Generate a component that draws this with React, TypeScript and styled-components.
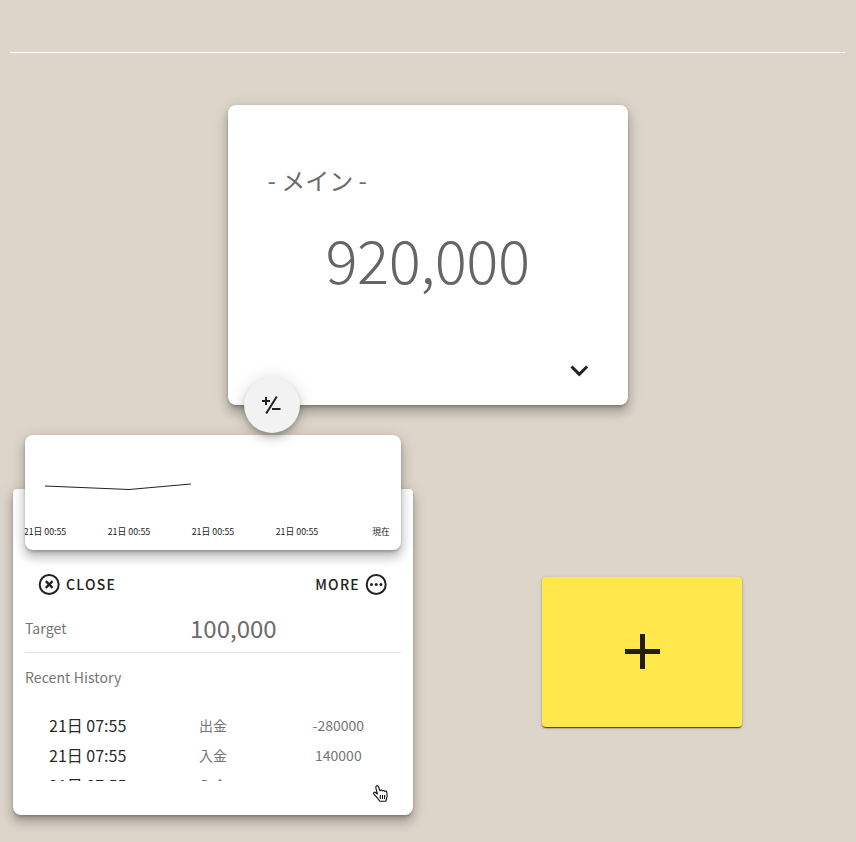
import React from "react";
import styled, { createGlobalStyle } from "styled-components";

const GlobalStyle = createGlobalStyle`
  *, *::before, *::after { box-sizing: border-box; }
  body {
    margin: 0;
    background: #ddd5c9;
    color: rgba(0, 0, 0, 0.87);
    font-family: "Noto Sans CJK JP", "Noto Sans", sans-serif;
    -webkit-font-smoothing: antialiased;
  }
`;

const Page = styled.div`
  position: relative;
  height: 842px;
  overflow: hidden;
  background: #ddd5c9;
`;

const Header = styled.header`
  height: 53px;
  margin: 0 11px 0 10px;
  border-bottom: 1px solid #fff;
`;

const Overview = styled.section`
  display: flex;
  justify-content: center;
  padding-top: 52px;
`;

const Surface = styled.div<{ $radius: string }>`
  background: #fff;
  border-radius: ${(p) => p.$radius};
  box-shadow: 0 5px 5px -3px rgba(0, 0, 0, 0.2), 0 8px 10px 1px rgba(0, 0, 0, 0.14),
    0 3px 14px 2px rgba(0, 0, 0, 0.12), 0 1px 3px rgba(0, 0, 0, 0.16);
`;

const MainCard = styled(Surface)`
  position: relative;
  display: flex;
  flex-direction: column;
  width: 400px;
  height: 300px;
`;

const AccountName = styled.h1`
  margin: 57px 0 0 39.5px;
  font-size: 24px;
  font-weight: 400;
  line-height: 36px;
  color: #6b6b6b;
`;

const Balance = styled.p`
  margin: 24px 1px 0 0;
  text-align: center;
  font-size: 60px;
  font-weight: 300;
  line-height: 72px;
  letter-spacing: -0.5px;
  color: #656565;
`;

const ExpandButton = styled.button`
  align-self: flex-end;
  display: flex;
  margin: 70px 36px 0 0;
  padding: 0;
  border: 0;
  background: none;
  color: #212121;
`;

const Fab = styled.button`
  position: absolute;
  z-index: 3;
  left: 16px;
  bottom: -28px;
  display: grid;
  place-items: center;
  width: 56px;
  height: 56px;
  padding: 0;
  border: 0;
  border-radius: 50%;
  background: #f2f2f2;
  color: #212121;
  box-shadow: 0 3px 5px -1px rgba(0, 0, 0, 0.2), 0 6px 10px 0 rgba(0, 0, 0, 0.14),
    0 1px 18px 0 rgba(0, 0, 0, 0.12);
`;

const Boards = styled.section`
  display: flex;
  align-items: flex-start;
  padding: 84px 0 0 13px;
`;

const DetailCard = styled(Surface)`
  width: 400px;
  height: 326px;
  padding: 0 12px;
`;

const ChartCard = styled(Surface)`
  height: 115px;
  margin-top: -54px;
  overflow: hidden;
`;

const Chart = styled.svg`
  display: block;
  text {
    font-size: 8.8px;
    text-anchor: middle;
    fill: #1c1c1c;
  }
`;

const Actions = styled.div`
  display: flex;
  justify-content: space-between;
  padding: 20px 13px 1px;
`;

const TextButton = styled.button`
  display: flex;
  align-items: center;
  gap: 4px;
  height: 28px;
  padding: 0;
  border: 0;
  background: none;
  color: #212121;
  font: 500 14px/28px "Noto Sans CJK JP", sans-serif;
  letter-spacing: 1.25px;
`;

const TargetRow = styled.div`
  display: flex;
  align-items: center;
  height: 54px;
  padding-top: 5px;
  border-bottom: 1px solid #dfdfdf;
`;

const Label = styled.span`
  width: 165px;
  font-size: 14px;
  line-height: 20px;
  letter-spacing: 0.1px;
  color: #757575;
`;

const TargetValue = styled.span`
  font-size: 24px;
  line-height: 32px;
  color: #6b6b6b;
`;

const HistoryTitle = styled.div`
  display: flex;
  padding-top: 14px;
`;

const History = styled.div`
  height: 71px;
  margin-top: 23px;
  overflow: hidden;
`;

const HistoryRow = styled.div`
  display: grid;
  grid-template-columns: repeat(3, 1fr);
  height: 30px;
  line-height: 30px;
  text-align: center;
`;

const DateCell = styled.span`
  font-size: 16px;
`;

const ValueCell = styled.span`
  font-size: 14px;
  letter-spacing: 0.02px;
  color: #757575;
`;

const AddCard = styled.button`
  display: grid;
  place-items: center;
  width: 200px;
  height: 150px;
  margin: 88px 0 0 129px;
  padding: 0;
  border: 0;
  border-radius: 4px;
  background: #ffe74c;
  color: #231f0a;
  box-shadow: 0 2px 1px -1px rgba(0, 0, 0, 0.5), 0 1px 1px 0 rgba(0, 0, 0, 0.25),
    0 1px 3px 0 rgba(0, 0, 0, 0.3);
`;

const Pointer = styled.svg`
  position: absolute;
  z-index: 4;
  left: 372px;
  top: 784px;
`;

const points = [
  [20, 51],
  [104, 54.5],
  [166, 49],
];

const ticks = [
  { x: 20, label: "21日 00:55" },
  { x: 104, label: "21日 00:55" },
  { x: 188, label: "21日 00:55" },
  { x: 272, label: "21日 00:55" },
  { x: 356, label: "現在" },
];

const history = [
  { date: "21日 07:55", kind: "出金", amount: "-280000" },
  { date: "21日 07:55", kind: "入金", amount: "140000" },
  { date: "21日 07:55", kind: "入金", amount: "40000" },
];

export default function App() {
  return (
    <>
      <GlobalStyle />
      <Page>
        <Header />
        <Overview>
          <MainCard $radius="8px">
            <AccountName>- メイン -</AccountName>
            <Balance>920,000</Balance>
            <ExpandButton aria-label="expand">
              <svg width="26" height="14" viewBox="0 0 26 14" fill="none" stroke="currentColor" strokeWidth="3">
                <path d="M5.5 2.5 13.3 10.3 21.1 2.5" />
              </svg>
            </ExpandButton>
            <Fab aria-label="plus minus">
              <svg width="24" height="24" viewBox="0 0 24 24" fill="none" stroke="currentColor" strokeWidth="2">
                <path d="M6 4v8M2 8h8M16.8 3.5 6.2 20.5M12 16h8.5" />
              </svg>
            </Fab>
          </MainCard>
        </Overview>
        <Boards>
          <DetailCard $radius="4px 4px 8px 8px">
            <ChartCard $radius="8px">
              <Chart width="376" height="115" viewBox="0 0 376 115">
                <polyline
                  points={points.map((p) => p.join(",")).join(" ")}
                  fill="none"
                  stroke="#222"
                  strokeWidth="1"
                />
                {ticks.map((t) => (
                  <text key={t.x} x={t.x} y="100">
                    {t.label}
                  </text>
                ))}
              </Chart>
            </ChartCard>
            <Actions>
              <TextButton>
                <svg width="24" height="24" viewBox="0 0 24 24" fill="none" stroke="currentColor" strokeWidth="2">
                  <circle cx="11.2" cy="12.5" r="9.5" />
                  <path d="m7.8 9.1 6.8 6.8M14.6 9.1l-6.8 6.8" strokeWidth="2.3" />
                </svg>
                CLOSE
              </TextButton>
              <TextButton>
                MORE
                <svg width="24" height="24" viewBox="0 0 24 24" fill="none" stroke="currentColor" strokeWidth="2">
                  <circle cx="12.2" cy="12.5" r="9.5" />
                  <g fill="currentColor" stroke="none">
                    <circle cx="7.5" cy="12.5" r="1.5" />
                    <circle cx="12.2" cy="12.5" r="1.5" />
                    <circle cx="16.9" cy="12.5" r="1.5" />
                  </g>
                </svg>
              </TextButton>
            </Actions>
            <TargetRow>
              <Label>Target</Label>
              <TargetValue>100,000</TargetValue>
            </TargetRow>
            <HistoryTitle>
              <Label>Recent History</Label>
            </HistoryTitle>
            <History>
              {history.map((h, i) => (
                <HistoryRow key={i}>
                  <DateCell>{h.date}</DateCell>
                  <ValueCell>{h.kind}</ValueCell>
                  <ValueCell>{h.amount}</ValueCell>
                </HistoryRow>
              ))}
            </History>
          </DetailCard>
          <AddCard aria-label="add">
            <svg width="36" height="36" viewBox="0 0 36 36" fill="currentColor">
              <path d="M16 0h5v15h15v5H21v15h-5V20H1v-5h15z" />
            </svg>
          </AddCard>
        </Boards>
        <Pointer width="18" height="20" viewBox="0 0 18 20" fill="#fff" stroke="#111" strokeWidth="1.1" strokeLinejoin="round">
          <path d="M4.2 2.2c.8-1 2-.5 2.3.5l1.4 4.1c.3-1 2-1 2.4.2.5-.9 2-.7 2.3.4.8-.7 2-.3 2.2.8.5 2.6.6 4.5-.3 6.3l-.5 2.7H7.6c-.5-1.7-2-2.8-3-4.1C3.7 12 2.5 10.8 1.7 9.8c-.8-1.2.6-2.2 1.8-1.3l1.9 1.5L3.9 4.1c-.2-.7-.2-1.3.3-1.9z" />
          <path d="M8.3 11v4M10.500 11v4M12.600 11v4" fill="none" />
        </Pointer>
      </Page>
    </>
  );
}
